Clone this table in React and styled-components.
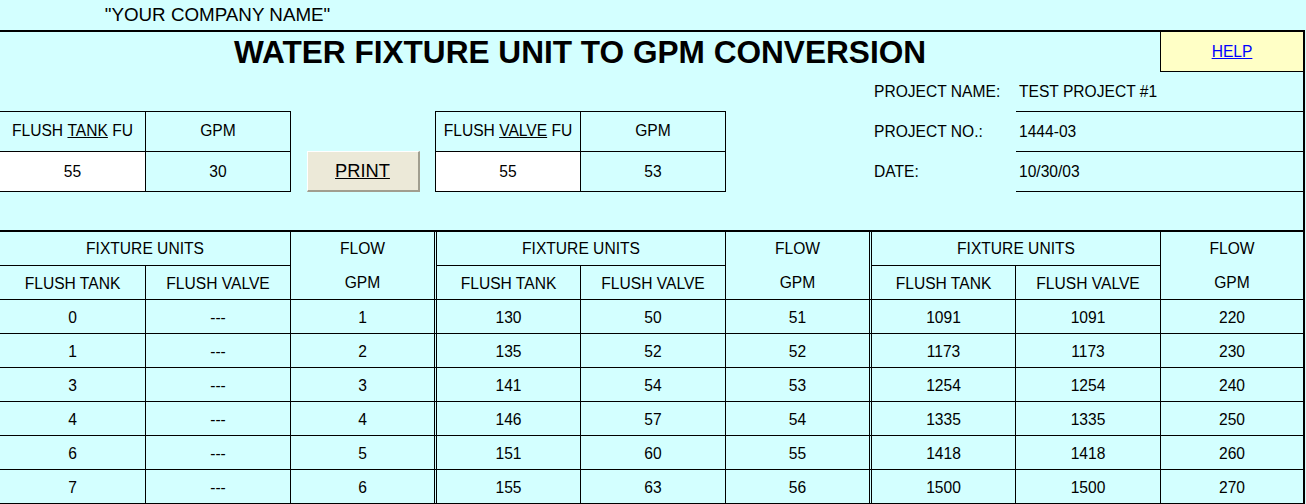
import React from 'react';
import styled, { createGlobalStyle } from 'styled-components';

const CYAN = '#D3FFFF';
const INK = '#000000';

const GlobalStyle = createGlobalStyle`
  html, body { margin: 0; padding: 0; background: ${CYAN}; }
  body { font-family: "Liberation Sans", Arial, sans-serif; color: ${INK}; }
  *, *::before, *::after { box-sizing: border-box; }
`;

const Sheet = styled.div`
  width: 1306px;
  height: 504px;
  overflow: hidden;
  background: ${CYAN};
`;

const CompanyRow = styled.div`
  display: grid;
  grid-template-columns: 435px 1fr;
  height: 30px;
`;

const CompanyName = styled.div`
  display: flex;
  align-items: center;
  justify-content: center;
  font-size: 18.8px;
`;

const Frame = styled.div`
  width: 1305px;
  border-top: 2px solid ${INK};
  border-right: 2px solid ${INK};
`;

const UpperGrid = styled.div`
  display: grid;
  grid-template-columns: 146px 145px 144px 146px 145px 145px 145px 145px 142px;
  grid-template-rows: 40px 40px 40px 40px 38px;
`;

const Title = styled.h1`
  grid-column: 1 / 9;
  grid-row: 1;
  margin: 0;
  display: flex;
  align-items: center;
  justify-content: center;
  border-right: 1px solid ${INK};
  font-size: 31.6px;
  font-weight: bold;
`;

const HelpCell = styled.div`
  grid-column: 9;
  grid-row: 1;
  display: flex;
  align-items: center;
  justify-content: center;
  background: #ffffc6;
  border-bottom: 1px solid ${INK};
`;

const HelpLink = styled.a`
  color: #0000ff;
  text-decoration: underline;
  font-size: 15.6px;
  cursor: pointer;
`;

const InputBox = styled.div`
  grid-column: ${(p) => p.$cols};
  grid-row: 2 / 5;
  align-self: end;
  height: 81px;
  display: grid;
  grid-template-columns: ${(p) => p.$template};
  grid-template-rows: 40px 40px;
  border-top: 1px solid ${INK};
  border-left: ${(p) => (p.$left ? `1px solid ${INK}` : 'none')};
`;

const BoxCell = styled.div`
  display: flex;
  align-items: center;
  justify-content: center;
  border-right: 1px solid ${INK};
  border-bottom: 1px solid ${INK};
  background: ${(p) => (p.$white ? '#ffffff' : 'transparent')};
  font-size: 15.6px;
  padding: ${(p) => (p.$head ? '0 0 2px' : '0')};
  white-space: nowrap;
`;

const Under = styled.span`
  text-decoration: underline;
`;

const PrintButton = styled.button`
  grid-column: 3;
  grid-row: 3 / 5;
  align-self: end;
  justify-self: center;
  width: 113px;
  height: 41px;
  margin: 0;
  padding: 0;
  background: #ece9d8;
  border-style: solid;
  border-width: 1px 2px 2px 1px;
  border-color: #ffffff #a19e8f #a19e8f #ffffff;
  font-family: "Liberation Sans", Arial, sans-serif;
  font-size: 18.3px;
  color: ${INK};
  text-decoration: underline;
  cursor: pointer;
`;

const ProjectLabel = styled.div`
  grid-column: 7;
  grid-row: ${(p) => p.$row};
  display: flex;
  align-items: center;
  padding: 0 0 0 3px;
  font-size: 15.6px;
  white-space: nowrap;
`;

const ProjectValue = styled.div`
  grid-column: 8 / 10;
  grid-row: ${(p) => p.$row};
  display: flex;
  align-items: center;
  padding: 0 0 0 3px;
  border-bottom: 1px solid ${INK};
  font-size: 15.6px;
  white-space: nowrap;
`;

const Table = styled.div`
  display: grid;
  grid-template-columns: 146px 145px 146px 144px 145px 146px 144px 145px 142px;
  grid-auto-rows: 34px;
  border-top: 2px solid ${INK};
`;

const edgeBorder = (edge) =>
  edge === 'double' ? `3px double ${INK}` : edge === 'single' ? `1px solid ${INK}` : 'none';

const TCell = styled.div`
  grid-column: ${(p) => `${p.$c} / span ${p.$span || 1}`};
  grid-row: ${(p) => `${p.$r} / span ${p.$rspan || 1}`};
  display: flex;
  align-items: center;
  justify-content: center;
  border-right: ${(p) => edgeBorder(p.$edge)};
  border-bottom: 1px solid ${INK};
  padding-top: ${(p) => p.$pt || 0}px;
  font-size: 15.6px;
  white-space: nowrap;
`;

const FlowCell = styled.div`
  grid-column: ${(p) => p.$c};
  grid-row: 1 / span 2;
  display: flex;
  flex-direction: column;
  border-right: ${(p) => edgeBorder(p.$edge)};
  border-bottom: 1px solid ${INK};
  font-size: 15.6px;
`;

const FlowPart = styled.div`
  flex: 1;
  display: flex;
  align-items: center;
  justify-content: center;
  padding-top: ${(p) => p.$pt || 0}px;
`;

const EDGES = ['single', 'single', 'double', 'single', 'single', 'double', 'single', 'single', 'none'];

const GROUPS = [
  [
    ['0', '---', '1'],
    ['1', '---', '2'],
    ['3', '---', '3'],
    ['4', '---', '4'],
    ['6', '---', '5'],
    ['7', '---', '6'],
  ],
  [
    ['130', '50', '51'],
    ['135', '52', '52'],
    ['141', '54', '53'],
    ['146', '57', '54'],
    ['151', '60', '55'],
    ['155', '63', '56'],
  ],
  [
    ['1091', '1091', '220'],
    ['1173', '1173', '230'],
    ['1254', '1254', '240'],
    ['1335', '1335', '250'],
    ['1418', '1418', '260'],
    ['1500', '1500', '270'],
  ],
];

function ConversionTable() {
  const cells = [];
  GROUPS.forEach((rows, g) => {
    const base = g * 3 + 1;
    cells.push(
      <TCell key={`fu${g}`} $c={base} $span={2} $r={1} $edge="single" $pt={0}>
        FIXTURE UNITS
      </TCell>
    );
    cells.push(
      <FlowCell key={`fl${g}`} $c={base + 2} $edge={EDGES[base + 1]}>
        <FlowPart $pt={1}>FLOW</FlowPart>
        <FlowPart $pt={3}>GPM</FlowPart>
      </FlowCell>
    );
    cells.push(
      <TCell key={`ft${g}`} $c={base} $r={2} $edge="single" $pt={2}>
        FLUSH TANK
      </TCell>
    );
    cells.push(
      <TCell key={`fv${g}`} $c={base + 1} $r={2} $edge="single" $pt={2}>
        FLUSH VALVE
      </TCell>
    );
    rows.forEach((row, i) => {
      row.forEach((val, j) => {
        cells.push(
          <TCell key={`d${g}-${i}-${j}`} $c={base + j} $r={3 + i} $edge={EDGES[base + j - 1]} $pt={2}>
            {val}
          </TCell>
        );
      });
    });
  });
  return <Table>{cells}</Table>;
}

export default function App() {
  return (
    <Sheet>
      <GlobalStyle />
      <CompanyRow>
        <CompanyName>"YOUR COMPANY NAME"</CompanyName>
      </CompanyRow>
      <Frame>
        <UpperGrid>
          <Title>WATER FIXTURE UNIT TO GPM CONVERSION</Title>
          <HelpCell>
            <HelpLink>HELP</HelpLink>
          </HelpCell>

          <InputBox $cols="1 / 3" $template="146px 145px">
            <BoxCell $head>
              FLUSH&nbsp;<Under>TANK</Under>&nbsp;FU
            </BoxCell>
            <BoxCell $head>GPM</BoxCell>
            <BoxCell $white>55</BoxCell>
            <BoxCell>30</BoxCell>
          </InputBox>

          <PrintButton type="button">PRINT</PrintButton>

          <InputBox $cols="4 / 6" $template="145px 145px" $left>
            <BoxCell $head>
              FLUSH&nbsp;<Under>VALVE</Under>&nbsp;FU
            </BoxCell>
            <BoxCell $head>GPM</BoxCell>
            <BoxCell $white>55</BoxCell>
            <BoxCell>53</BoxCell>
          </InputBox>

          <ProjectLabel $row={2}>PROJECT NAME:</ProjectLabel>
          <ProjectValue $row={2}>TEST PROJECT #1</ProjectValue>
          <ProjectLabel $row={3}>PROJECT NO.:</ProjectLabel>
          <ProjectValue $row={3}>1444-03</ProjectValue>
          <ProjectLabel $row={4}>DATE:</ProjectLabel>
          <ProjectValue $row={4}>10/30/03</ProjectValue>
        </UpperGrid>
        <ConversionTable />
      </Frame>
    </Sheet>
  );
}
